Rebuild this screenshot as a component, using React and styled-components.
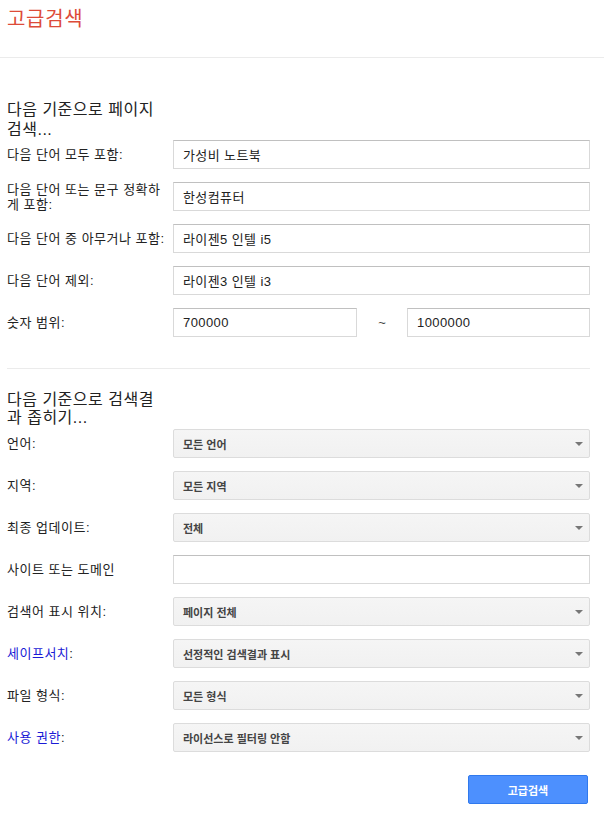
import styled, { createGlobalStyle } from "styled-components";

const GlobalStyle = createGlobalStyle`
  html, body {
    margin: 0;
    padding: 0;
    background: #fff;
  }
  body {
    font-family: "Liberation Sans", "Noto Sans CJK KR", sans-serif;
    color: #222;
  }
  * {
    box-sizing: border-box;
  }
`;

const pageFilters = [
  { label: "다음 단어 모두 포함:", value: "가성비 노트북" },
  { label: "다음 단어 또는 문구 정확하게 포함:", value: "한성컴퓨터" },
  { label: "다음 단어 중 아무거나 포함:", value: "라이젠5 인텔 i5" },
  { label: "다음 단어 제외:", value: "라이젠3 인텔 i3" },
];

const narrowFilters = [
  { label: "언어", value: "모든 언어", select: true },
  { label: "지역", value: "모든 지역", select: true },
  { label: "최종 업데이트", value: "전체", select: true },
  { label: "사이트 또는 도메인", value: "", noColon: true },
  { label: "검색어 표시 위치", value: "페이지 전체", select: true },
  { label: "세이프서치", value: "선정적인 검색결과 표시", select: true, link: true },
  { label: "파일 형식", value: "모든 형식", select: true },
  { label: "사용 권한", value: "라이선스로 필터링 안함", select: true, link: true },
];

const App = () => {
  return (
    <Page>
      <GlobalStyle />
      <Header>
        <Title>고급검색</Title>
      </Header>

      <Section>
        <Heading $lh={20}>다음 기준으로 페이지 검색...</Heading>
        <Rows>
          {pageFilters.map((f) => (
            <Row key={f.label}>
              <Label>{f.label}</Label>
              <TextInput>{f.value}</TextInput>
            </Row>
          ))}
          <Row>
            <Label>숫자 범위:</Label>
            <Range>
              <TextInput>700000</TextInput>
              <Tilde>~</Tilde>
              <TextInput>1000000</TextInput>
            </Range>
          </Row>
        </Rows>
      </Section>

      <Divider />

      <Section $second>
        <Heading $lh={18}>다음 기준으로 검색결과 좁히기...</Heading>
        <Rows>
          {narrowFilters.map((f) => (
            <Row key={f.label}>
              <Label>
                {f.link ? <LinkText>{f.label}</LinkText> : f.label}
                {f.noColon ? "" : ":"}
              </Label>
              {f.select ? (
                <Select>
                  {f.value}
                  <Arrow />
                </Select>
              ) : (
                <TextInput>{f.value}</TextInput>
              )}
            </Row>
          ))}
        </Rows>
        <Actions>
          <SubmitButton>고급검색</SubmitButton>
        </Actions>
      </Section>
    </Page>
  );
};

const Page = styled.div`
  width: 604px;
  padding: 0 14px 15px 7px;
`;

const Header = styled.div`
  height: 58px;
  margin: 0 -14px 0 -7px;
  padding: 7px 0 0 7px;
  border-bottom: 1px solid #ebebeb;
`;

const Title = styled.h1`
  margin: 0;
  font-size: 20px;
  line-height: 24px;
  font-weight: normal;
  letter-spacing: 0.7px;
  color: #dd4b39;
`;

const Section = styled.div`
  padding-top: ${(p) => (p.$second ? "22px" : "42px")};
`;

const Heading = styled.div`
  width: 152px;
  font-size: 16px;
  line-height: ${(p) => p.$lh}px;
  letter-spacing: 0.5px;
  color: #222;
  margin-bottom: ${(p) => (p.$lh === 18 ? "2px" : "0")};
`;

const Rows = styled.div`
  display: flex;
  flex-direction: column;
  gap: 13px;
`;

const Row = styled.div`
  display: flex;
  align-items: center;
  height: 29px;
`;

const Label = styled.div`
  flex: none;
  width: 164px;
  margin-right: 2px;
  font-size: 13px;
  line-height: 15px;
  letter-spacing: 0.5px;
  color: #222;
`;

const LinkText = styled.span`
  color: #1a1ad6;
`;

const TextInput = styled.div`
  flex: 1;
  height: 29px;
  display: flex;
  align-items: center;
  padding: 0 9px;
  background: #fff;
  border: 1px solid #d9d9d9;
  border-top-color: #c0c0c0;
  font-size: 13px;
  letter-spacing: 0.4px;
  color: #222;
`;

const Range = styled.div`
  flex: 1;
  display: grid;
  grid-template-columns: 184px 1fr 183px;
  align-items: center;
`;

const Tilde = styled.span`
  text-align: center;
  font-size: 13px;
  color: #444;
`;

const Select = styled.div`
  position: relative;
  flex: 1;
  height: 29px;
  display: flex;
  align-items: center;
  padding: 0 9px;
  background: linear-gradient(#f5f5f5, #f1f1f1);
  border: 1px solid #dcdcdc;
  border-radius: 2px;
  font-size: 11px;
  font-weight: bold;
  color: #444;
`;

const Arrow = styled.span`
  position: absolute;
  right: 6px;
  top: 12px;
  width: 0;
  height: 0;
  border-left: 4px solid transparent;
  border-right: 4px solid transparent;
  border-top: 4px solid #777;
`;

const Divider = styled.div`
  height: 1px;
  margin-top: 31px;
  background: #ebebeb;
`;

const Actions = styled.div`
  display: flex;
  justify-content: flex-end;
  padding: 23px 2px 0 0;
`;

const SubmitButton = styled.button`
  width: 120px;
  height: 29px;
  background: #4d90fe;
  border: 1px solid #3079ed;
  border-radius: 2px;
  color: #fff;
  font-family: "Liberation Sans", "Noto Sans CJK KR", sans-serif;
  font-size: 11px;
  font-weight: bold;
  cursor: pointer;
`;

export default App;
